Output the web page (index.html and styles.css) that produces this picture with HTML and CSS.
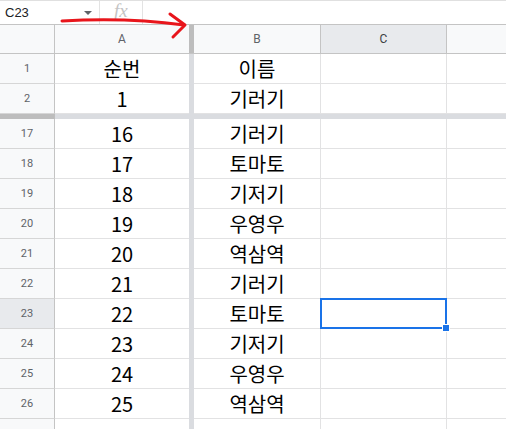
FILE: index.html
```html
<!DOCTYPE html>
<html lang="ko">
<head>
    <meta charset="UTF-8">
    <title>Sheet</title>
    <link rel="stylesheet" href="styles.css">
</head>
<body>
    <div class="sheet">
        <!-- formula bar -->
        <div class="fbar">
            <div class="namebox">
                <span class="ref">C23</span>
                <span class="caret"></span>
            </div>
            <div class="fx">fx</div>
            <div class="formula"></div>
        </div>

        <!-- column headers -->
        <div class="row head">
            <div class="rh"></div>
            <div class="c ca">A</div>
            <div class="frz"></div>
            <div class="c cb">B</div>
            <div class="c cc sel">C</div>
            <div class="c cd"></div>
        </div>

        <div class="row"><div class="rh">1</div><div class="c ca">순번</div><div class="frz"></div><div class="c cb">이름</div><div class="c cc"></div><div class="c cd"></div></div>
        <div class="row"><div class="rh">2</div><div class="c ca">1</div><div class="frz"></div><div class="c cb">기러기</div><div class="c cc"></div><div class="c cd"></div></div>

        <!-- frozen rows divider -->
        <div class="row band"><div class="rh"></div><div class="c ca"></div><div class="frz"></div><div class="c cb"></div><div class="c cc"></div><div class="c cd"></div></div>

        <div class="row"><div class="rh">17</div><div class="c ca">16</div><div class="frz"></div><div class="c cb">기러기</div><div class="c cc"></div><div class="c cd"></div></div>
        <div class="row"><div class="rh">18</div><div class="c ca">17</div><div class="frz"></div><div class="c cb">토마토</div><div class="c cc"></div><div class="c cd"></div></div>
        <div class="row"><div class="rh">19</div><div class="c ca">18</div><div class="frz"></div><div class="c cb">기저기</div><div class="c cc"></div><div class="c cd"></div></div>
        <div class="row"><div class="rh">20</div><div class="c ca">19</div><div class="frz"></div><div class="c cb">우영우</div><div class="c cc"></div><div class="c cd"></div></div>
        <div class="row"><div class="rh">21</div><div class="c ca">20</div><div class="frz"></div><div class="c cb">역삼역</div><div class="c cc"></div><div class="c cd"></div></div>
        <div class="row"><div class="rh">22</div><div class="c ca">21</div><div class="frz"></div><div class="c cb">기러기</div><div class="c cc"></div><div class="c cd"></div></div>
        <div class="row"><div class="rh sel">23</div><div class="c ca">22</div><div class="frz"></div><div class="c cb">토마토</div><div class="c cc active"></div><div class="c cd"></div></div>
        <div class="row"><div class="rh">24</div><div class="c ca">23</div><div class="frz"></div><div class="c cb">기저기</div><div class="c cc"></div><div class="c cd"></div></div>
        <div class="row"><div class="rh">25</div><div class="c ca">24</div><div class="frz"></div><div class="c cb">우영우</div><div class="c cc"></div><div class="c cd"></div></div>
        <div class="row"><div class="rh">26</div><div class="c ca">25</div><div class="frz"></div><div class="c cb">역삼역</div><div class="c cc"></div><div class="c cd"></div></div>
        <div class="row"><div class="rh">27</div><div class="c ca"></div><div class="frz"></div><div class="c cb"></div><div class="c cc"></div><div class="c cd"></div></div>

        <!-- hand drawn arrow -->
        <svg class="scribble" width="200" height="45" viewBox="0 0 200 45">
            <path d="M62 21 C 95 19, 140 19, 184 25" />
            <path d="M170 14 L185 25 L173 37" />
        </svg>
    </div>
</body>
</html>
```

FILE: styles.css
```css
/* page */
body {
    margin: 0;
    background: #ffffff;
    font-family: Roboto, "Liberation Sans", sans-serif;
    overflow: hidden;
}

.sheet {
    position: relative;
    width: 506px;
}

/* formula bar */
.fbar {
    display: flex;
    align-items: center;
    height: 24px;
    border-top: 1px solid #e0e0e0;
    box-sizing: border-box;
}

.namebox {
    display: flex;
    align-items: center;
    justify-content: space-between;
    width: 100px;
    height: 100%;
    padding: 0 7px 0 5px;
    box-sizing: border-box;
    border-right: 1px solid #e3e3e3;
}

.ref {
    font-family: "Liberation Sans", Arial, sans-serif;
    font-size: 13px;
    color: #202124;
}

.caret {
    width: 0;
    height: 0;
    border-left: 4px solid transparent;
    border-right: 4px solid transparent;
    border-top: 4px solid #5f6368;
}

.fx {
    width: 43px;
    height: 100%;
    box-sizing: border-box;
    border-right: 1px solid #e3e3e3;
    font-family: "Liberation Serif", serif;
    font-style: italic;
    font-size: 19px;
    line-height: 20px;
    color: #c4c4c4;
    padding-left: 14px;
}

/* grid rows */
.row {
    display: grid;
    grid-template-columns: 55px 134px 5px 127px 126px 59px;
    height: 30px;
}

.c, .rh {
    box-sizing: border-box;
    display: flex;
    align-items: center;
    justify-content: center;
    border-bottom: 1px solid #e2e2e3;
}

.c {
    font-family: "Noto Sans CJK KR", "Noto Sans", sans-serif;
    font-size: 20px;
    color: #000000;
}

.cb, .cc {
    border-right: 1px solid #e2e2e3;
}

.rh {
    background: #f8f9fa;
    border-right: 1px solid #c4c4c4;
    border-bottom-color: #d6d6d6;
    font-size: 11px;
    color: #5f6368;
}

.rh.sel {
    background: #e8eaed;
}

.frz {
    background: #dadce0;
}

/* column header row */
.head {
    border-top: 1px solid #c4c4c4;
    box-sizing: border-box;
}

.head .c {
    background: #f8f9fa;
    font-family: Roboto, "Liberation Sans", sans-serif;
    font-size: 12px;
    color: #5f6368;
    border-bottom: 1px solid #c4c4c4;
}

.head .cb, .head .cc {
    border-right-color: #c4c4c4;
}

.head .rh {
    border-bottom-color: #c4c4c4;
}

.head .sel {
    background: #e8eaed;
    color: #3c4043;
}

.head .frz {
    background: #bdbdbd;
    border-bottom: 1px solid #c4c4c4;
}

/* frozen rows divider */
.band {
    height: 5px;
}

.band .c, .band .rh {
    border: none;
    background: #dadce0;
}

.band .rh {
    background: #bdbdbd;
}

/* active cell */
.active {
    position: relative;
}

.active::before {
    content: "";
    position: absolute;
    left: -1px;
    top: -1px;
    right: -1px;
    bottom: -1px;
    border: 2px solid #1a73e8;
}

.active::after {
    content: "";
    position: absolute;
    right: -4px;
    bottom: -4px;
    width: 6px;
    height: 6px;
    background: #1a73e8;
    border: 1px solid #ffffff;
}

/* red marker arrow */
.scribble {
    position: absolute;
    left: 0;
    top: 0;
    pointer-events: none;
}

.scribble path {
    fill: none;
    stroke: #e8151b;
    stroke-width: 3;
    stroke-linecap: round;
    stroke-linejoin: round;
}
```
